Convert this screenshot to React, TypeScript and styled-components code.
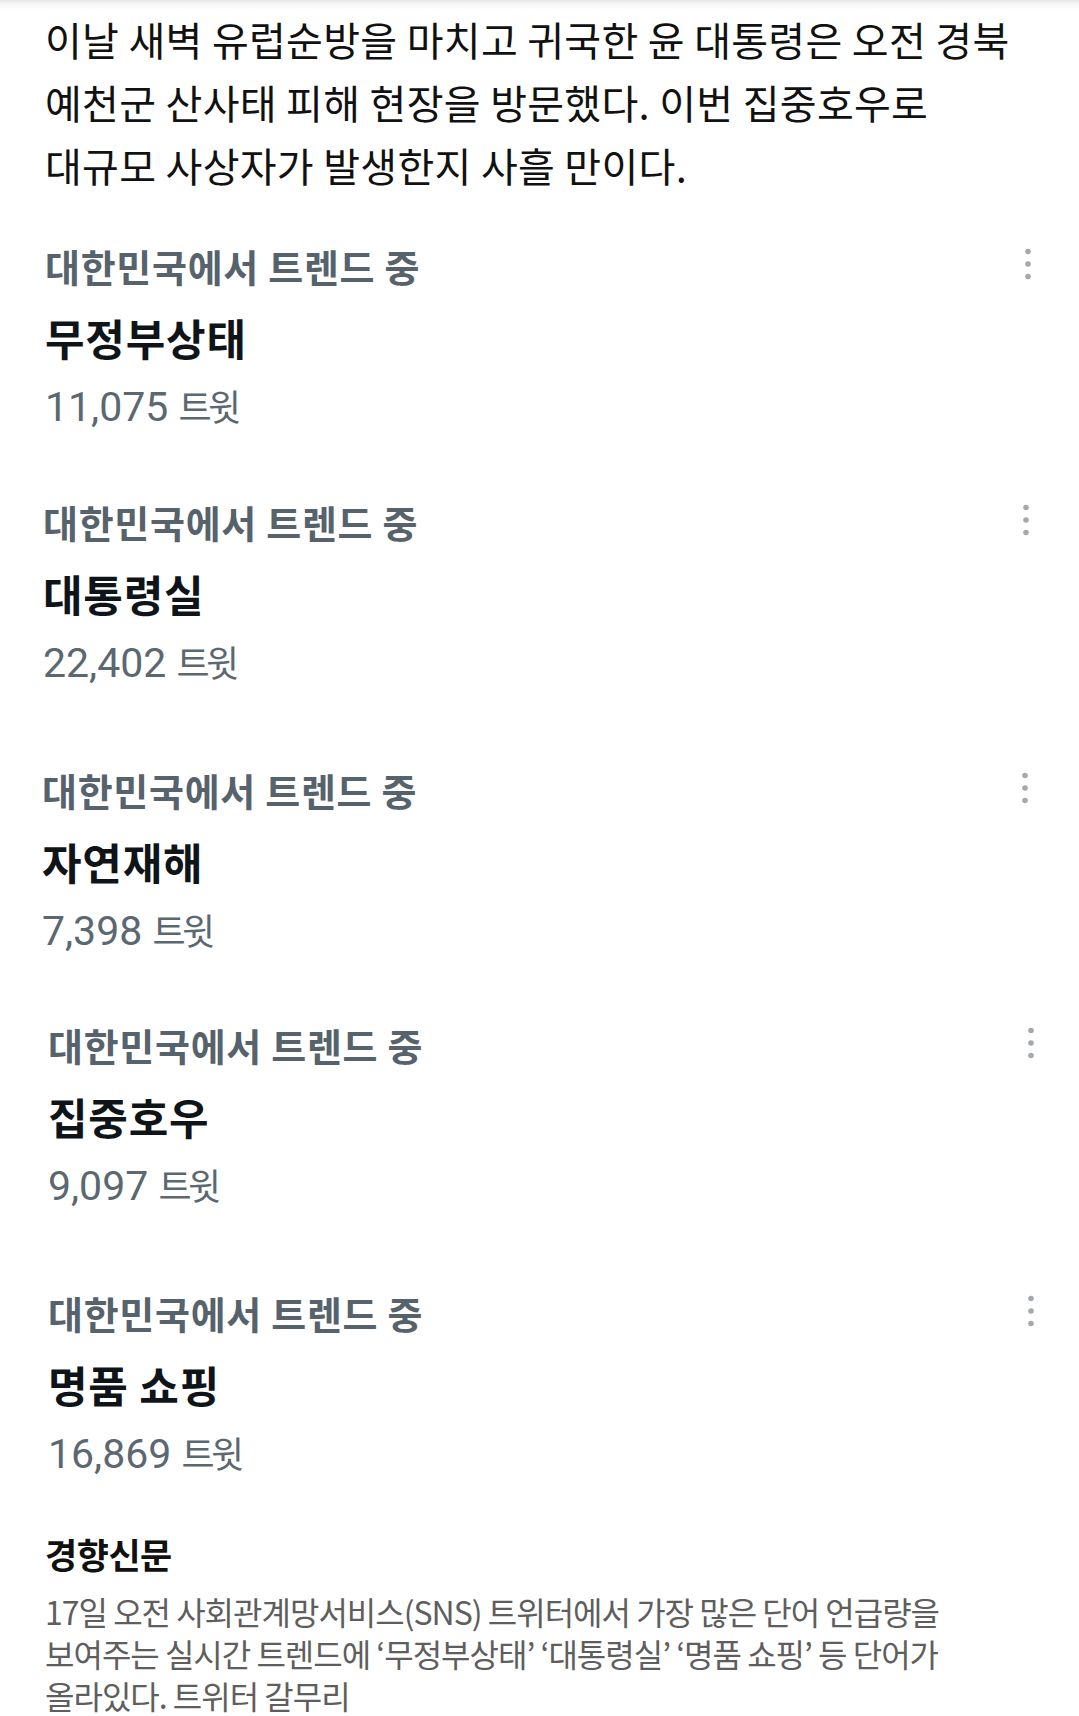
import React from "react";
import styled, { createGlobalStyle } from "styled-components";

const GlobalStyle = createGlobalStyle`
  html, body {
    margin: 0;
    padding: 0;
    background: #ffffff;
  }
  body {
    font-family: "Noto Sans CJK KR", "Noto Sans", sans-serif;
    -webkit-font-smoothing: antialiased;
  }
`;

const Page = styled.main`
  box-sizing: border-box;
  width: 1079px;
  min-height: 1716px;
  padding: 8px 47px 0 45px;
  background: linear-gradient(#e6e6e6 0px, #f6f6f6 4px, #ffffff 10px);
  overflow: hidden;
`;

const Lead = styled.p`
  margin: 0 0 32.5px;
  font-size: 40px;
  line-height: 63px;
  letter-spacing: 0.3px;
  color: #111111;
  font-weight: 400;
`;

const Line = styled.span`
  display: block;
  white-space: nowrap;
`;

const TrendList = styled.section`
  display: flex;
  flex-direction: column;
`;

const TrendItem = styled.article<{ $gap: number; $shift: number }>`
  display: flex;
  justify-content: space-between;
  align-items: flex-start;
  margin-top: ${(p) => p.$gap}px;
  margin-left: ${(p) => p.$shift}px;
  margin-right: ${(p) => -p.$shift}px;
`;

const TrendBody = styled.div`
  display: flex;
  flex-direction: column;
`;

const Label = styled.div`
  font-size: 38px;
  line-height: 72px;
  letter-spacing: 0.7px;
  font-weight: 700;
  color: #56626c;
  white-space: nowrap;
`;

const Title = styled.div`
  font-size: 43px;
  line-height: 71px;
  letter-spacing: 0.8px;
  font-weight: 700;
  color: #0f1419;
  white-space: nowrap;
`;

const Count = styled.div`
  font-family: Roboto, "Liberation Sans", sans-serif;
  font-size: 41px;
  line-height: 68px;
  font-weight: 400;
  color: #5b6771;
  white-space: nowrap;
`;

const Unit = styled.span`
  font-family: "Noto Sans CJK KR", sans-serif;
  font-size: 36px;
  line-height: 1;
  letter-spacing: -3.5px;
`;

const MoreIcon = styled.svg`
  flex: none;
  width: 8px;
  height: 32px;
  margin-top: 18px;
`;

const Source = styled.footer`
  display: flex;
  flex-direction: column;
  margin-top: 41px;
`;

const SourceName = styled.h2`
  margin: 0;
  font-size: 35px;
  line-height: 50px;
  letter-spacing: -0.5px;
  font-weight: 700;
  color: #111111;
`;

const Caption = styled.p`
  margin: 11px 0 0;
  font-size: 32px;
  line-height: 42px;
  letter-spacing: -1px;
  font-weight: 400;
  color: #5e5e5e;
`;

const More = () => (
  <MoreIcon viewBox="0 0 8 32" aria-hidden="true">
    <circle cx="4" cy="3.5" r="2.8" fill="#a4a9ae" />
    <circle cx="4" cy="16" r="2.8" fill="#a4a9ae" />
    <circle cx="4" cy="28.5" r="2.8" fill="#a4a9ae" />
  </MoreIcon>
);

const trends = [
  { title: "무정부상태", count: "11,075", gap: 0, shift: 0 },
  { title: "대통령실", count: "22,402", gap: 45, shift: -2 },
  { title: "자연재해", count: "7,398", gap: 57, shift: -3 },
  { title: "집중호우", count: "9,097", gap: 44, shift: 3 },
  { title: "명품 쇼핑", count: "16,869", gap: 57, shift: 3 },
];

const leadLines = [
  "이날 새벽 유럽순방을 마치고 귀국한 윤 대통령은 오전 경북",
  "예천군 산사태 피해 현장을 방문했다. 이번 집중호우로",
  "대규모 사상자가 발생한지 사흘 만이다.",
];

const captionLines = [
  "17일 오전 사회관계망서비스(SNS) 트위터에서 가장 많은 단어 언급량을",
  "보여주는 실시간 트렌드에 ‘무정부상태’ ‘대통령실’ ‘명품 쇼핑’ 등 단어가",
  "올라있다. 트위터 갈무리",
];

export default function App() {
  return (
    <>
      <GlobalStyle />
      <Page>
        <Lead>
          {leadLines.map((l) => (
            <Line key={l}>{l}</Line>
          ))}
        </Lead>
        <TrendList>
          {trends.map((t) => (
            <TrendItem key={t.title} $gap={t.gap} $shift={t.shift}>
              <TrendBody>
                <Label>대한민국에서 트렌드 중</Label>
                <Title>{t.title}</Title>
                <Count>
                  {t.count} <Unit>트윗</Unit>
                </Count>
              </TrendBody>
              <More />
            </TrendItem>
          ))}
        </TrendList>
        <Source>
          <SourceName>경향신문</SourceName>
          <Caption>
            {captionLines.map((l) => (
              <Line key={l}>{l}</Line>
            ))}
          </Caption>
        </Source>
      </Page>
    </>
  );
}
